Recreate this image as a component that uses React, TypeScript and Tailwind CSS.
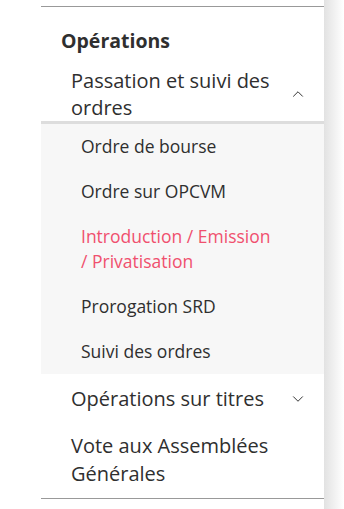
import { ChevronUp, ChevronDown } from "lucide-react"

const subItems = [
    { label: "Ordre de bourse" },
    { label: "Ordre sur OPCVM" },
    { label: "Introduction / Emission / Privatisation", active: true },
    { label: "Prorogation SRD" },
    { label: "Suivi des ordres" },
]

export default function App() {
    return (
        <div className="flex h-[509px] w-[344px] bg-white font-['Open_Sans','Noto_Sans',sans-serif] text-[#2f2f2f]">
            <div className="w-[41px] shrink-0" />
            <nav className="flex w-[283px] shrink-0 flex-col pt-[6px]">
                <div className="border-t border-[#999] pt-[21px]">
                    <h2 className="pl-[20px] text-[19.5px] font-bold leading-[26px]">Opérations</h2>

                    {/* Passation et suivi des ordres */}
                    <div className="mt-[13px] flex items-center pl-[30px] pr-[17px]">
                        <span className="flex-1 text-[20px] leading-[27px]">Passation et suivi des ordres</span>
                        <ChevronUp className="h-[18px] w-[18px]" strokeWidth={1.3} />
                    </div>
                    <ul className="border-t-[3px] border-[#ddd] bg-[#f7f7f7]">
                        {subItems.map(item => (
                            <li key={item.label} className={`py-[10px] pl-[40px] pr-[50px] text-[17.5px] leading-[25px] ${item.active ? "text-[#f0506e]" : ""}`}>
                                {item.label}
                            </li>
                        ))}
                    </ul>

                    <div className="flex items-center pb-[10px] pl-[30px] pr-[17px] pt-[11px]">
                        <span className="flex-1 text-[20px] leading-[27px]">Opérations sur titres</span>
                        <ChevronDown className="h-[18px] w-[18px]" strokeWidth={1.3} />
                    </div>
                    <div className="pb-[10px] pl-[30px] pr-[17px] pt-[10px] text-[20px] leading-[28px]">
                        Vote aux Assemblées Générales
                    </div>
                </div>
                <div className="border-t border-[#999]" />
            </nav>
            <div className="w-[20px] bg-gradient-to-r from-[#e2e2e2] to-white" />
        </div>
    )
}
